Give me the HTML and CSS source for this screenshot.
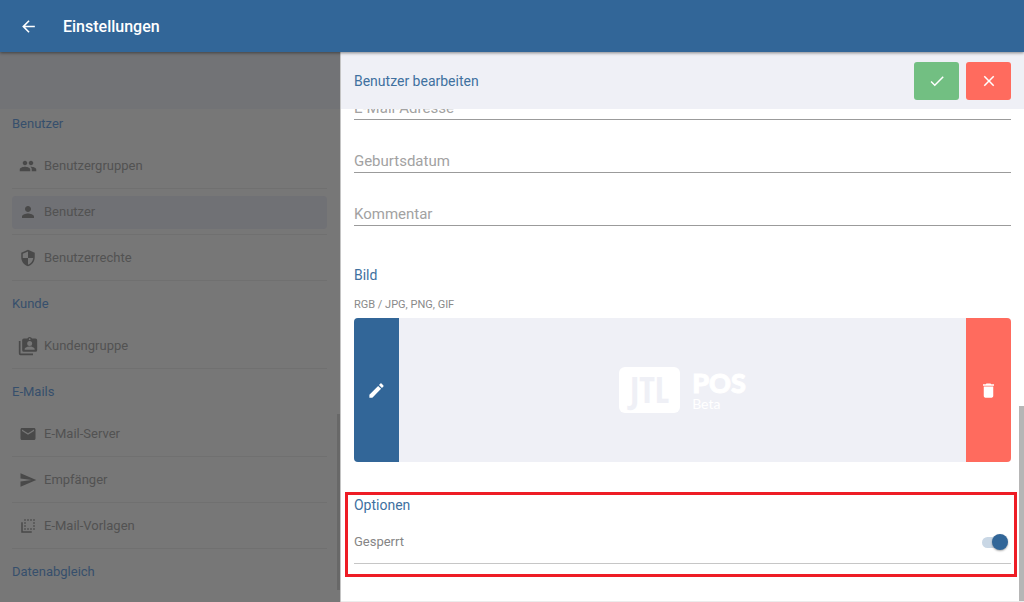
FILE: index.html
```html
<!DOCTYPE html>
<html lang="de">
<head>
<meta charset="utf-8">
<meta name="viewport" content="width=device-width, initial-scale=1">
<title>Einstellungen</title>
<link rel="stylesheet" href="styles.css">
</head>
<body>
<div class="app">
  <header class="topbar">
    <button class="back" type="button" aria-label="Zurück">
      <svg viewBox="0 0 24 24"><path d="M20 11H7.83l5.59-5.59L12 4l-8 8 8 8 1.41-1.41L7.83 13H20v-2z"/></svg>
    </button>
    <h1 class="topbar-title">Einstellungen</h1>
  </header>
  <div class="body">
    <aside class="sidebar">
      <div class="sidebar-band"></div>
      <nav class="nav">
        <h2 class="nav-heading">Benutzer</h2>
        <ul class="nav-list">
          <li class="nav-row"><a class="nav-link" href="#"><svg viewBox="0 0 24 24"><path d="M16 11c1.66 0 2.99-1.34 2.99-3S17.66 5 16 5s-3 1.34-3 3 1.34 3 3 3zm-8 0c1.66 0 2.99-1.34 2.99-3S9.66 5 8 5 5 6.34 5 8s1.34 3 3 3zm0 2c-2.33 0-7 1.17-7 3.500V19h14v-2.500c0-2.330-4.670-3.500-7-3.500zm8 0c-.29 0-.62.02-.97.05 1.160.84 1.970 1.970 1.970 3.450V19h6v-2.500c0-2.330-4.670-3.500-7-3.500z"/></svg>Benutzergruppen</a></li>
          <li class="nav-row"><a class="nav-link active" href="#"><svg viewBox="0 0 24 24"><path d="M12 12c2.210 0 4-1.790 4-4s-1.790-4-4-4-4 1.790-4 4 1.790 4 4 4zm0 2c-2.670 0-8 1.340-8 4v2h16v-2c0-2.660-5.330-4-8-4z"/></svg>Benutzer</a></li>
          <li class="nav-row"><a class="nav-link" href="#"><svg viewBox="0 0 24 24"><path d="M12 1 3 5v6c0 5.550 3.840 10.740 9 12 5.160-1.260 9-6.450 9-12V5l-9-4zm0 10.990h7c-.53 4.120-3.280 7.790-7 8.940V12H5V6.300l7-3.110v8.800z"/></svg>Benutzerrechte</a></li>
        </ul>
        <h2 class="nav-heading">Kunde</h2>
        <ul class="nav-list">
          <li class="nav-row"><a class="nav-link" href="#"><svg class="large" viewBox="0 0 24 24"><path fill-rule="evenodd" d="M3 6H1v15a2 2 0 0 0 2 2h15v-2H3zM21 3h-4.200a3 3 0 0 0-5.600 0H7a2 2 0 0 0-2 2v12a2 2 0 0 0 2 2h14a2 2 0 0 0 2-2V5a2 2 0 0 0-2-2zm-7-.200a1 1 0 1 1 0 2 1 1 0 0 1 0-2zM14 6a3 3 0 1 1 0 6 3 3 0 0 1 0-6zm6 10.500H8v-1c0-2 4-3 6-3s6 1 6 3z"/></svg>Kundengruppe</a></li>
        </ul>
        <h2 class="nav-heading">E-Mails</h2>
        <ul class="nav-list">
          <li class="nav-row"><a class="nav-link" href="#"><svg viewBox="0 0 24 24"><path d="M20 4H4c-1.100 0-1.990.9-1.990 2L2 18c0 1.100.9 2 2 2h16c1.100 0 2-.9 2-2V6c0-1.100-.9-2-2-2zm0 4-8 5-8-5V6l8 5 8-5v2z"/></svg>E-Mail-Server</a></li>
          <li class="nav-row"><a class="nav-link" href="#"><svg viewBox="0 0 24 24"><path d="M2.010 21 23 12 2.010 3 2 10l15 2-15 2z"/></svg>Empfänger</a></li>
          <li class="nav-row"><a class="nav-link" href="#"><svg viewBox="0 0 24 24"><path d="M3 7v14h14v-2H5V7zM7 3h2v2H7zM11 3h2v2h-2zM15 3h2v2h-2zM19 3h2v2h-2zM7 7h2v2H7zM7 11h2v2H7zM7 15h2v2H7zM11 15h2v2h-2zM15 15h2v2h-2zM19 15h2v2h-2zM19 11h2v2h-2zM19 7h2v2h-2z"/></svg>E-Mail-Vorlagen</a></li>
        </ul>
        <h2 class="nav-heading">Datenabgleich</h2>
      </nav>
      <div class="sidebar-thumb"></div>
    </aside>
    <main class="panel">
      <div class="panel-head">
        <h2 class="panel-title">Benutzer bearbeiten</h2>
        <button class="action save" type="button" aria-label="Speichern"><svg viewBox="0 0 24 24"><path d="M9 16.170 4.830 12l-1.420 1.410L9 19 21 7l-1.410-1.410z"/></svg></button>
        <button class="action cancel" type="button" aria-label="Abbrechen"><svg viewBox="0 0 24 24"><path d="M19 6.410 17.590 5 12 10.590 6.410 5 5 6.410 10.590 12 5 17.590 6.410 19 12 13.410 17.590 19 19 17.590 13.410 12z"/></svg></button>
      </div>
      <div class="panel-scroll">
        <form class="form">
          <div class="fields">
            <input class="field" type="email" placeholder="E-Mail-Adresse" aria-label="E-Mail-Adresse">
            <input class="field" type="text" placeholder="Geburtsdatum" aria-label="Geburtsdatum">
            <input class="field" type="text" placeholder="Kommentar" aria-label="Kommentar">
          </div>
          <section class="picture">
            <h3 class="section-title">Bild</h3>
            <p class="hint">RGB / JPG, PNG, GIF</p>
            <div class="uploader">
              <button class="side edit" type="button" aria-label="Bild bearbeiten"><svg viewBox="0 0 24 24"><path d="M3 17.250V21h3.750L17.810 9.940l-3.750-3.750L3 17.250zM20.710 7.040a1 1 0 0 0 0-1.410l-2.340-2.340a1 1 0 0 0-1.410 0l-1.830 1.830 3.750 3.750 1.830-1.830z"/></svg></button>
              <div class="preview">
                <span class="logo-mark">JTL</span>
                <span class="logo-text"><span class="logo-name">POS</span><span class="logo-stage">Beta</span></span>
              </div>
              <button class="side delete" type="button" aria-label="Bild löschen"><svg viewBox="0 0 24 24"><path d="M6 19c0 1.100.9 2 2 2h8c1.100 0 2-.9 2-2V7H6v12zM19 4h-3.500l-1-1h-5l-1 1H5v2h14V4z"/></svg></button>
            </div>
          </section>
          <section class="options">
            <h3 class="section-title">Optionen</h3>
            <div class="option-row">
              <label class="option-label" for="locked">Gesperrt</label>
              <input class="switch" id="locked" type="checkbox" checked>
            </div>
          </section>
        </form>
        <div class="panel-thumb"></div>
      </div>
    </main>
  </div>
</div>
</body>
</html>
```
FILE: styles.css
```css
* {
  box-sizing: border-box;
}

body {
  margin: 0;
  font-family: Roboto, "Liberation Sans", sans-serif;
  font-size: 13px;
  line-height: 16px;
  background: #fff;
}

h1, h2, h3, p, ul {
  margin: 0;
  padding: 0;
  font-weight: 400;
}

button {
  display: flex;
  align-items: center;
  justify-content: center;
  padding: 0;
  border: 0;
  background: none;
  cursor: pointer;
}

svg {
  display: block;
  fill: currentColor;
}

.app {
  display: flex;
  flex-direction: column;
  height: 100vh;
  overflow: hidden;
}

.topbar {
  position: relative;
  z-index: 2;
  display: flex;
  align-items: center;
  gap: 25px;
  flex: none;
  height: 52px;
  padding: 0 19px;
  color: #fff;
  background: #326698;
  box-shadow: 0 1px 3px rgba(0, 0, 0, 0.45);
}

.back {
  color: #fff;
}

.back svg {
  width: 19px;
  height: 19px;
}

.topbar-title {
  padding-top: 2px;
  font-size: 16px;
  font-weight: 500;
  line-height: 20px;
}

.body {
  display: flex;
  flex: 1;
  min-height: 0;
}

.sidebar {
  position: relative;
  flex: 0 0 33.2%;
  overflow: hidden;
  background: #777;
}

.sidebar-band {
  height: 57px;
  background: #727376;
}

.nav {
  padding: 0 13px 0 12px;
}

.nav-heading {
  padding: 15px 0 11px;
  font-size: 13px;
  color: #364f6c;
}

.nav-heading:first-child {
  padding-top: 7px;
}

.nav-list {
  list-style: none;
}

.nav-row {
  padding: 7px 0 5px;
  border-bottom: 1px solid #707070;
}

.nav-link {
  display: flex;
  align-items: center;
  gap: 7px;
  height: 33px;
  padding: 0 7px 2px;
  border-radius: 4px;
  color: #525252;
  text-decoration: none;
}

.nav-link.active {
  background: #707175;
}

.nav-link svg {
  width: 18px;
  height: 18px;
  color: #494949;
}

.nav-link .large {
  width: 20px;
  height: 20px;
  margin: 0 -1px;
}

.sidebar-thumb {
  position: absolute;
  top: 362px;
  right: 0;
  bottom: 12px;
  width: 3px;
  background: #686868;
}

.panel {
  display: flex;
  flex: 1;
  flex-direction: column;
  min-width: 0;
  border-left: 1px solid #c4c4c4;
}

.panel-head {
  position: relative;
  z-index: 1;
  display: flex;
  align-items: center;
  gap: 7px;
  flex: none;
  height: 57px;
  padding: 0 13px;
  background: #eff0f6;
}

.panel-title {
  flex: 1;
  font-size: 14px;
  line-height: 20px;
  color: #40709f;
}

.action {
  width: 45px;
  height: 38px;
  border-radius: 3px;
  color: #fff;
}

.action svg {
  width: 18px;
  height: 18px;
}

.save {
  background: #72bf82;
}

.cancel {
  background: #ff6b5e;
}

.panel-scroll {
  position: relative;
  flex: 1;
  min-height: 0;
  overflow: hidden;
  border-bottom: 1px solid #ececec;
}

.form {
  padding: 0 13px;
}

.fields {
  margin-top: -42px;
}

.field {
  display: block;
  width: 100%;
  height: 53px;
  padding: 29px 0 0;
  border: 0;
  border-bottom: 1px solid #9b9b9b;
  border-radius: 0;
  outline: 0;
  background: none;
  font: inherit;
  font-size: 15px;
  color: #555;
}

.field::placeholder {
  color: #a2a2a2;
  opacity: 1;
}

.picture {
  padding-top: 39px;
}

.section-title {
  font-size: 14px;
  line-height: 20px;
  color: #40709f;
}

.hint {
  padding: 12px 0 5px;
  font-size: 11px;
  line-height: 16px;
  color: #8a8a8a;
}

.uploader {
  display: flex;
  height: 144px;
  overflow: hidden;
  border-radius: 4px;
  background: #eff0f6;
}

.side {
  flex: 0 0 45px;
  color: #fff;
}

.side svg {
  width: 19px;
  height: 19px;
}

.edit {
  background: #326698;
}

.delete {
  background: #ff6b5e;
}

.preview {
  display: flex;
  flex: 1;
  align-items: center;
  justify-content: center;
  gap: 12px;
  color: #fff;
}

.logo-mark {
  display: flex;
  align-items: center;
  justify-content: center;
  width: 61px;
  height: 46px;
  border-radius: 6px;
  background: #fff;
  font-family: "Liberation Sans Narrow", "Open Sans Condensed", Roboto, sans-serif;
  font-size: 36px;
  font-weight: 700;
  line-height: 46px;
  color: #eff0f6;
}

.logo-text {
  display: flex;
  flex-direction: column;
}

.logo-name {
  font-family: Lato, sans-serif;
  font-size: 27px;
  font-weight: 900;
  line-height: 28px;
  -webkit-text-stroke: 1px #fff;
}

.logo-stage {
  font-family: Lato, sans-serif;
  font-size: 14px;
  line-height: 14px;
}

.options {
  position: relative;
  margin-top: 33px;
}

.options::after {
  content: "";
  position: absolute;
  inset: -3px -6px -13px -9px;
  border: 3px solid #ee1c25;
  pointer-events: none;
}

.option-row {
  display: flex;
  align-items: center;
  justify-content: space-between;
  height: 49px;
  padding-top: 6px;
  border-bottom: 1px solid #c6c6c6;
}

.option-label {
  color: #858585;
}

.switch {
  position: relative;
  appearance: none;
  width: 24px;
  height: 11px;
  margin: 0 5px 0 0;
  border-radius: 6px;
  background: #c9d7e5;
  cursor: pointer;
}

.switch::after {
  content: "";
  position: absolute;
  top: -3px;
  right: -2px;
  width: 16px;
  height: 16px;
  border-radius: 50%;
  background: #326698;
  box-shadow: 0 1px 2px rgba(0, 0, 0, 0.35);
}

.panel-thumb {
  position: absolute;
  top: 297px;
  right: 0;
  bottom: 0;
  width: 5px;
  background: #b6b6b6;
}
```
